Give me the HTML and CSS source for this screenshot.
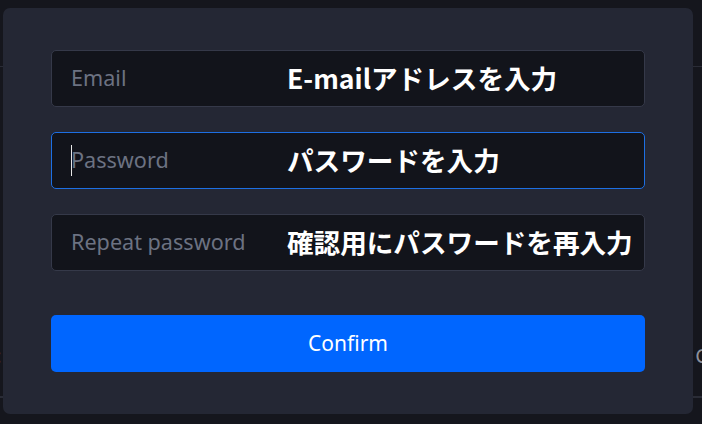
FILE: index.html
```html
<!DOCTYPE html>
<html lang="ja">
<head>
<meta charset="utf-8">
<title>Sign up</title>
<link rel="stylesheet" href="styles.css">
</head>
<body>
  <div class="backdrop">
    <div class="bg-row bg-row-top"></div>
    <div class="bg-row bg-row-mid"><span class="bg-text bg-text-left">:</span><span class="bg-text bg-text-right">C</span></div>
    <div class="bg-row bg-row-bottom"></div>
  </div>

  <div class="modal">
    <form class="form">
      <div class="field">
        <span class="placeholder">Email</span>
        <span class="note">E-mailアドレスを入力</span>
      </div>
      <div class="field field-focus">
        <span class="placeholder"><span class="caret"></span>Password</span>
        <span class="note">パスワードを入力</span>
      </div>
      <div class="field">
        <span class="placeholder">Repeat password</span>
        <span class="note">確認用にパスワードを再入力</span>
      </div>
      <button type="button" class="confirm">Confirm</button>
    </form>
  </div>
</body>
</html>
```

FILE: styles.css
```css
* { box-sizing: border-box; }

html, body {
  margin: 0;
  padding: 0;
}

body {
  width: 702px;
  height: 424px;
  overflow: hidden;
  background: #15161d;
  position: relative;
  font-family: "Noto Sans", "Noto Sans CJK JP", sans-serif;
}

.backdrop {
  display: flex;
  flex-direction: column;
}

.bg-row {
  border-bottom: 1px solid #2a2c36;
}

.bg-row-top { height: 67px; }

.bg-row-mid {
  height: 330px;
  display: flex;
  justify-content: space-between;
  align-items: center;
  padding-top: 248px;
}

.bg-text {
  color: #8d909b;
  font-size: 20px;
}

.bg-text-left { margin-left: -4px; }
.bg-text-right { margin-right: -6px; }

.modal {
  position: absolute;
  left: 3px;
  top: 8px;
  width: 690px;
  height: 406px;
  background: #242734;
  border-radius: 7px;
  padding: 42px 48px 42px 48px;
}

.form {
  display: flex;
  flex-direction: column;
  gap: 25px;
}

.field {
  height: 57px;
  background: #12141b;
  border: 1px solid #353949;
  border-radius: 5px;
  display: grid;
  grid-template-columns: 216px 1fr;
  align-items: center;
  padding-left: 19px;
}

.field-focus {
  border-color: #1d6fe3;
}

.placeholder {
  color: #6c7282;
  font-size: 21.6px;
  font-family: "Noto Sans", sans-serif;
  display: flex;
  align-items: center;
  position: relative;
  margin-top: -3px;
}

.caret {
  position: absolute;
  left: 0;
  top: 0;
  width: 1px;
  height: 31px;
  background: #e8e8e8;
}

.note {
  color: #ffffff;
  font-weight: 700;
  font-size: 26.6px;
  font-family: "Noto Sans CJK JP", sans-serif;
  white-space: nowrap;
  line-height: 1;
}

.confirm {
  margin-top: 19px;
  height: 57px;
  border: none;
  border-radius: 5px;
  background: #0066ff;
  color: #ffffff;
  font-family: "Noto Sans", sans-serif;
  font-size: 21px;
  padding: 0 0 2px;
}
```
